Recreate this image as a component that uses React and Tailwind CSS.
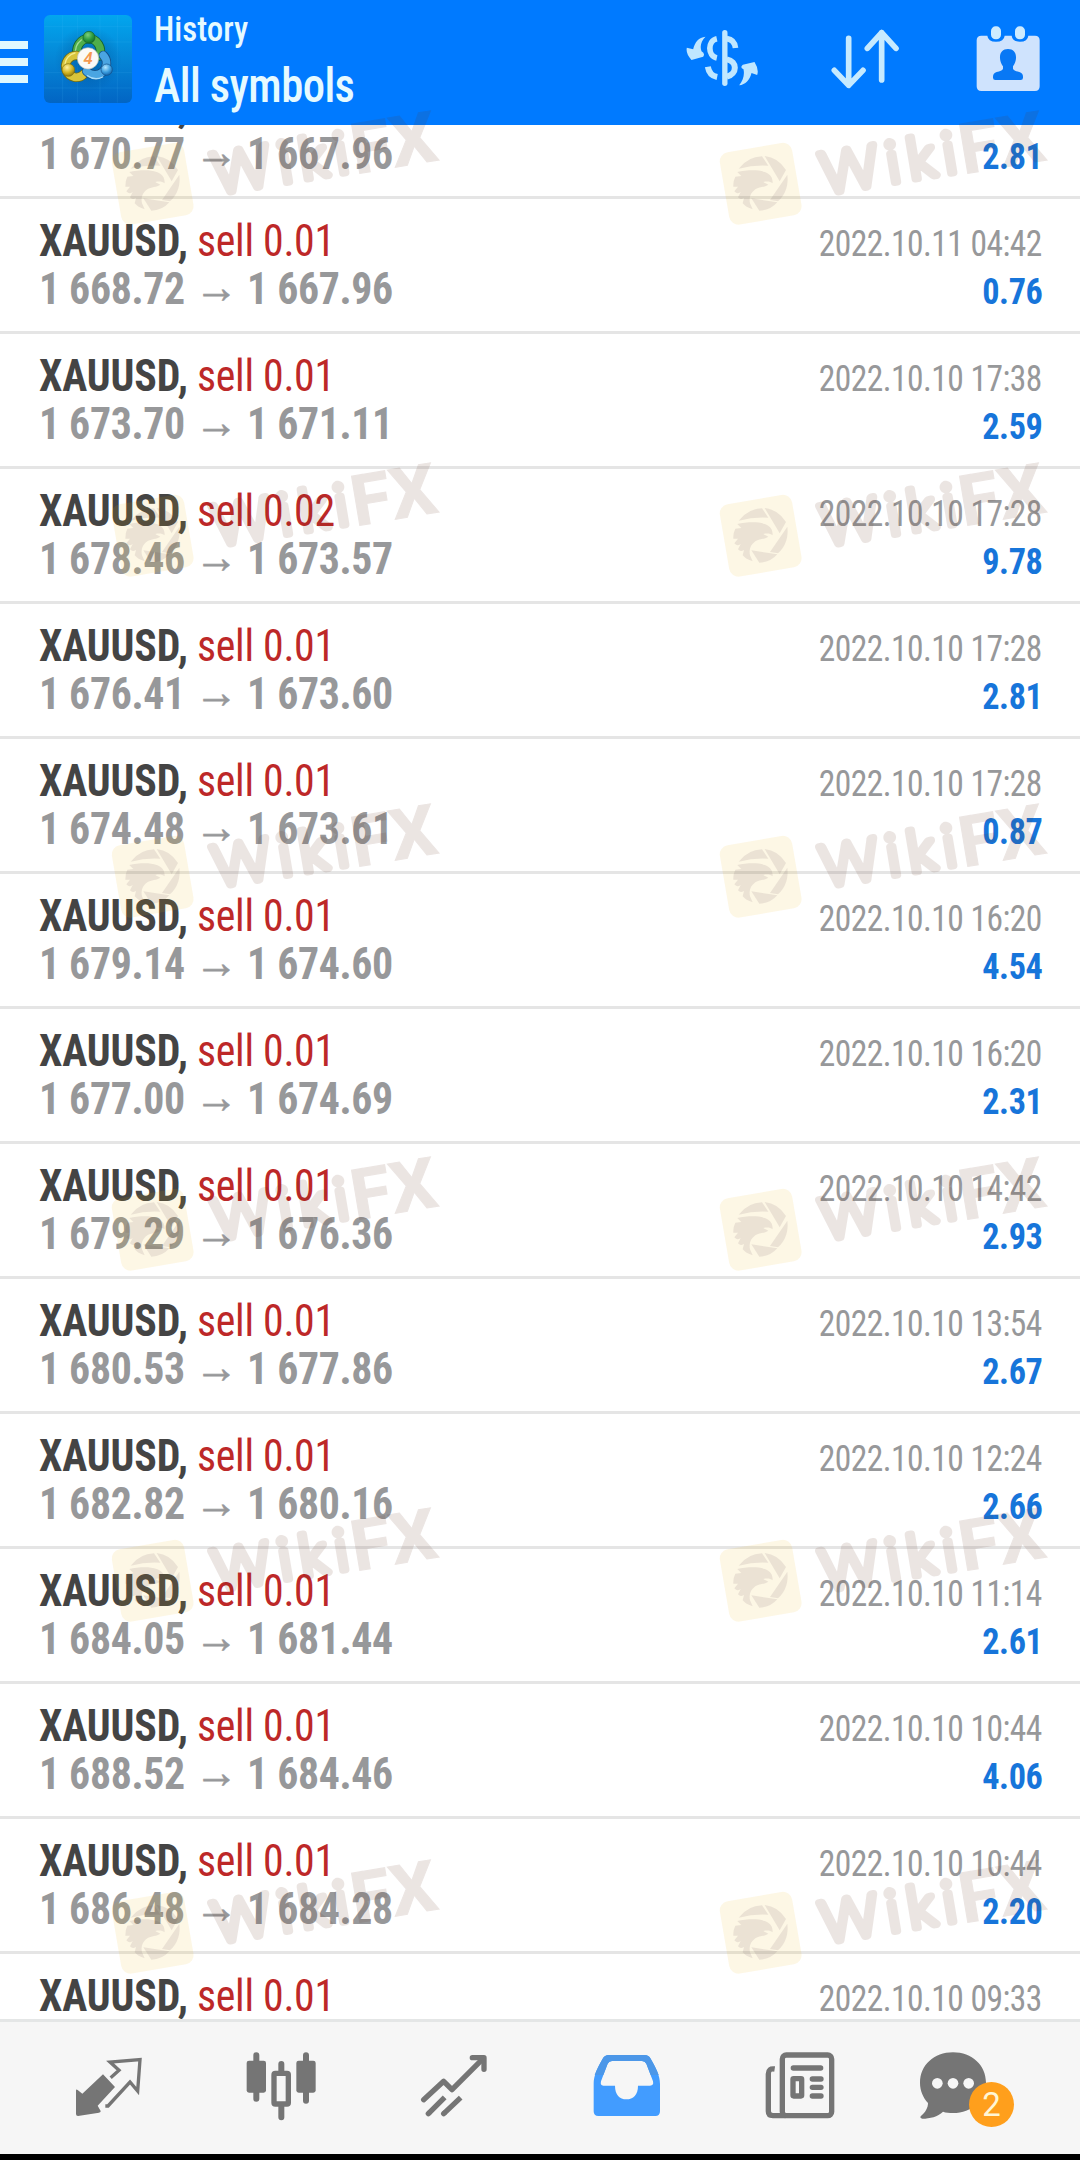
const trades = [
  { lot: "0.01", open: "1 670.77", close: "1 667.96", profit: "2.81" },
  { lot: "0.01", open: "1 668.72", close: "1 667.96", time: "2022.10.11 04:42", profit: "0.76" },
  { lot: "0.01", open: "1 673.70", close: "1 671.11", time: "2022.10.10 17:38", profit: "2.59" },
  { lot: "0.02", open: "1 678.46", close: "1 673.57", time: "2022.10.10 17:28", profit: "9.78" },
  { lot: "0.01", open: "1 676.41", close: "1 673.60", time: "2022.10.10 17:28", profit: "2.81" },
  { lot: "0.01", open: "1 674.48", close: "1 673.61", time: "2022.10.10 17:28", profit: "0.87" },
  { lot: "0.01", open: "1 679.14", close: "1 674.60", time: "2022.10.10 16:20", profit: "4.54" },
  { lot: "0.01", open: "1 677.00", close: "1 674.69", time: "2022.10.10 16:20", profit: "2.31" },
  { lot: "0.01", open: "1 679.29", close: "1 676.36", time: "2022.10.10 14:42", profit: "2.93" },
  { lot: "0.01", open: "1 680.53", close: "1 677.86", time: "2022.10.10 13:54", profit: "2.67" },
  { lot: "0.01", open: "1 682.82", close: "1 680.16", time: "2022.10.10 12:24", profit: "2.66" },
  { lot: "0.01", open: "1 684.05", close: "1 681.44", time: "2022.10.10 11:14", profit: "2.61" },
  { lot: "0.01", open: "1 688.52", close: "1 684.46", time: "2022.10.10 10:44", profit: "4.06" },
  { lot: "0.01", open: "1 686.48", close: "1 684.28", time: "2022.10.10 10:44", profit: "2.20" },
  { lot: "0.01", time: "2022.10.10 09:33" },
];

function AppLogo() {
  return (
    <svg viewBox="12 17 264 264" className="ml-4 h-[88px] w-[88px] shrink-0">
      <defs>
        <linearGradient id="tile" x1="0" y1="0" x2="0" y2="1">
          <stop offset="0" stopColor="#02a6ee" />
          <stop offset="0.5" stopColor="#0586d6" />
          <stop offset="1" stopColor="#0265c4" />
        </linearGradient>
        <radialGradient id="shade" cx="0.5" cy="0.5" r="0.5">
          <stop offset="0" stopColor="#00407e" stopOpacity="0.5" />
          <stop offset="1" stopColor="#00407e" stopOpacity="0" />
        </radialGradient>
        <radialGradient id="greenBall" cx="0.4" cy="0.3" r="0.7">
          <stop offset="0" stopColor="#7ed07a" />
          <stop offset="0.6" stopColor="#2b9a3e" />
          <stop offset="1" stopColor="#14702a" />
        </radialGradient>
        <radialGradient id="yellowBall" cx="0.4" cy="0.3" r="0.7">
          <stop offset="0" stopColor="#fff2a0" />
          <stop offset="0.6" stopColor="#d3b420" />
          <stop offset="1" stopColor="#927c10" />
        </radialGradient>
        <radialGradient id="blueBall" cx="0.4" cy="0.3" r="0.7">
          <stop offset="0" stopColor="#b4e6ff" />
          <stop offset="0.6" stopColor="#3d9fe0" />
          <stop offset="1" stopColor="#1668b0" />
        </radialGradient>
      </defs>
      <rect x="12" y="17" width="264" height="264" rx="18" fill="url(#tile)" />
      <path d="M68 18V280M112 18V280M180 18V280M232 18V280M13 52H275M13 98H275M13 190H275M13 236H275" stroke="#5cc4ff" strokeOpacity="0.12" strokeWidth="3" />
      <circle cx="144" cy="150" r="100" fill="url(#shade)" />
      <g fill="none" strokeLinecap="round">
        <path d="M114 140A35 37 0 1 1 178 140" stroke="#145f2c" strokeWidth="28" />
        <path d="M114 140A35 37 0 1 1 178 140" stroke="#4fae4b" strokeWidth="23" />
        <path d="M108 137A41 41 0 0 1 124 92" stroke="#a2dc96" strokeWidth="4" />
        <path d="M110 138A32 33 0 1 0 132 194" stroke="#6d6a16" strokeWidth="28" />
        <path d="M110 138A32 33 0 1 0 132 194" stroke="#d8c43a" strokeWidth="23" />
        <path d="M105 131A38 38 0 0 0 75 164" stroke="#f5eb8e" strokeWidth="4" />
        <path d="M190 138A34 34 0 1 1 140 186" stroke="#134e86" strokeWidth="28" />
        <path d="M190 138A34 34 0 1 1 140 186" stroke="#4aa5e2" strokeWidth="23" />
        <path d="M143 199A42 42 0 0 0 188 203" stroke="#a8dcfa" strokeWidth="4" />
      </g>
      <circle cx="147" cy="84" r="18" fill="url(#greenBall)" stroke="#145f2c" strokeWidth="2" />
      <circle cx="85" cy="182" r="19" fill="url(#yellowBall)" stroke="#7d6c10" strokeWidth="2" />
      <circle cx="200" cy="181" r="17" fill="url(#blueBall)" stroke="#134e86" strokeWidth="2" />
      <circle cx="144" cy="147" r="32" fill="#fbfaf7" stroke="#b7bdb8" strokeWidth="2" />
      <text x="144" y="164" textAnchor="middle" fontFamily="Roboto, sans-serif" fontWeight="600" fontStyle="italic" fontSize="50" fill="#f59a52">4</text>
    </svg>
  );
}

function Header() {
  return (
    <header className="flex h-[125px] shrink-0 items-start bg-[#007aff] pt-[15px] pr-10 shadow-[0_1px_1px_#0a5bb5]">
      <div className="mt-[26px] flex w-7 shrink-0 flex-col gap-[9px]">
        <span className="h-2 bg-[#dff8ff]" />
        <span className="h-2 bg-[#dff8ff]" />
        <span className="h-2 bg-[#dff8ff]" />
      </div>
      <AppLogo />
      <div className="-mt-[6px] ml-[22px] flex flex-col items-start whitespace-nowrap text-[#e6faff]">
        <span className="origin-left scale-x-[.94] text-[35px] leading-[42px] font-[480]">History</span>
        <span className="mt-[7px] origin-left scale-x-[.93] text-[48px] leading-[56px] font-[500] tracking-[-0.6px]">All symbols</span>
      </div>
      <div className="mt-[11px] ml-auto flex items-start">
        <svg viewBox="78 78 218 198" className="mr-[72px] h-[66px] w-[73px]" fill="none">
          <g stroke="#c0e7ff">
            <path d="M194 98V250" strokeWidth="16" strokeLinecap="round" />
            <path d="M170 116C142 122 142 168 170 174" strokeWidth="17" />
            <path d="M143 200C146 218 156 228 171 231" strokeWidth="18" />
            <path d="M200 116C215 118 224 128 226 144" strokeWidth="17" />
            <path d="M200 178C232 184 232 222 200 230" strokeWidth="18" />
          </g>
          <path d="M136 110C116 112 104 126 99 148L80 143Q76 160 94 180L129 170Q136 160 124 154C118 138 124 122 136 110Z" fill="#c0e7ff" />
          <path d="M237 256C256 254 269 240 274 219L291 225Q297 208 283 186L248 194Q238 202 250 208C254 226 248 242 237 256Z" fill="#c0e7ff" />
        </svg>
        <svg viewBox="513 78 204 198" className="mr-[77px] h-[66px] w-[68px]" fill="none" stroke="#c6eaff" strokeWidth="17" strokeLinecap="round" strokeLinejoin="round">
          <path d="M566 115V256M523 211L566 256L609 211" />
          <path d="M665 240V98M622 145L665 98L708 145" />
        </svg>
        <svg viewBox="948 78 192 198" className="h-[66px] w-[64px]">
          <path d="M964 107H982Q984 125 1008 125Q1032 125 1034 107H1055Q1057 125 1080 125Q1103 125 1105 107H1125Q1139 107 1139 121V259Q1139 273 1125 273H964Q950 273 950 259V121Q950 107 964 107Z" fill="#cfe3fd" />
          <rect x="993" y="79" width="30" height="39" rx="14" fill="#cdebff" />
          <rect x="1065" y="79" width="30" height="39" rx="14" fill="#cdebff" />
          <path d="M1044 147C1060 147 1069 158 1068 174C1067 188 1062 194 1059 199V206C1061 212 1068 213 1078 216Q1089 219 1089 230V233Q1089 240 1082 240H1006Q999 240 999 233V230Q999 219 1010 216C1020 213 1027 212 1029 206V199C1026 194 1021 188 1020 174C1019 158 1028 147 1044 147Z" fill="#0878f5" />
        </svg>
      </div>
    </header>
  );
}

function TradeRow({ lot, open, close, time, profit }) {
  return (
    <div className="h-[135px] shrink-0 border-b-[3px] border-[#e5e5e5] pt-[18px] pr-[38px] pl-[39px] whitespace-nowrap">
      <div className="flex h-12 items-baseline justify-between leading-[48px]">
        <div className="flex origin-left scale-x-[.95] items-baseline text-[44px]">
          <span className="font-bold tracking-[-0.1px] text-[#444444]">XAUUSD,</span>
          <span className="ml-[9.5px] font-[450] tracking-[-0.3px] text-[#bd2828]">sell {lot}</span>
        </div>
        <span className="origin-right scale-x-[.93] text-[36px] font-[450] tracking-[-0.58px] text-[#97989a]">{time}</span>
      </div>
      {open && (
        <div className="-mt-px flex h-12 items-baseline justify-between leading-[48px]">
          <div className="flex origin-left scale-x-[.95] items-baseline text-[44px] font-bold tracking-[-0.35px] text-[#97989a]">
            <span className="w-[153px]">{open}</span>
            <span className="relative -top-[1px] mr-[9px] ml-[11px] w-[46px] font-['Liberation_Sans',sans-serif] text-[46px] font-normal tracking-normal [-webkit-text-stroke:0.6px]">→</span>
            <span>{close}</span>
          </div>
          <span className="origin-right scale-x-[.95] text-[36px] font-bold tracking-[-0.4px] text-[#1775da]">{profit}</span>
        </div>
      )}
    </div>
  );
}

function Watermark() {
  return (
    <svg viewBox="160 320 1020 380" className="h-[126.67px] w-[340px] overflow-visible">
      <rect x="190" y="443" width="220" height="220" rx="28" transform="rotate(-9.8 302 553)" fill="#f0b400" fillOpacity="0.1" />
      <g fill="#5a3c50" fillOpacity="0.11">
        <path d="M234 508Q262 472 304 471L323 499Q280 496 234 508Z" />
        <path d="M312 470Q352 474 376 512L357 546Z" />
        <path d="M380 526Q386 574 352 606L328 602Z" />
        <path d="M272 597L350 609Q328 634 296 634Z" />
        <path d="M230 518C255 512 292 510 312 518C328 524 336 532 336 552C328 546 320 546 308 548C314 552 320 554 323 556C312 564 296 562 284 570C270 580 264 594 268 612L276 630C262 626 252 620 246 612L250 596C242 600 238 600 232 594L240 578C232 584 226 582 221 576L232 562L218 562Q217 545 224 532L242 530Z" />
      </g>
      <g transform="rotate(-9.5 475 597)" fill="#64321e" stroke="#64321e" opacity="0.12">
        <text x="493" y="587" fontFamily="Lato, sans-serif" fontWeight="300" fontSize="171" strokeWidth="23" strokeLinejoin="round" textLength="408" lengthAdjust="spacing">Wiki</text>
        <text x="914" y="597" fontFamily="Roboto, sans-serif" fontWeight="700" fontSize="211" strokeWidth="3" textLength="257" lengthAdjust="spacingAndGlyphs">FX</text>
      </g>
    </svg>
  );
}

function WatermarkColumn() {
  return (
    <div className="flex w-[340px] shrink-0 flex-col">
      <div className="h-[352px]"><Watermark /></div>
      <div className="h-[341px]"><Watermark /></div>
      <div className="h-[353px]"><Watermark /></div>
      <div className="h-[351px]"><Watermark /></div>
      <div className="h-[352px]"><Watermark /></div>
      <Watermark />
    </div>
  );
}

function Slot({ viewBox, children, badge }) {
  return (
    <div className="relative flex w-[173px] shrink-0 justify-center">
      <svg viewBox={viewBox} className="h-[70px] w-[70px] overflow-visible">{children}</svg>
      {badge && (
        <span className="absolute top-[32px] left-[83px] flex h-[45px] w-[45px] items-center justify-center rounded-full bg-[#ff9f1c] font-[Roboto,sans-serif] text-[33px] leading-none text-[#fff6d5]">{badge}</span>
      )}
    </div>
  );
}

function BottomNav() {
  const grey = "#757575";
  return (
    <nav className="flex h-[135px] shrink-0 items-start border-t-[3px] border-[#e4e6e6] bg-[#f6f6f6] pt-7 pl-[21px]">
      <Slot viewBox="219 150 210 210">
        <path d="M309 223L345 261L293 317L302 333Q303 337 297 338L234 348Q228 348 228 342V272Q228 266 233 270L247 281Z" fill={grey} />
        <path d="M316 318H324L390 246L413 273L420 179L330 186L357 211L332 233" fill="none" stroke={grey} strokeWidth="10" />
      </Slot>
      <Slot viewBox="738 150 210 210">
        <g stroke={grey} strokeWidth="18" strokeLinecap="round">
          <path d="M769 166V296M844 192V212M844 320V352M918 166V302" />
        </g>
        <rect x="740" y="182" width="58" height="96" rx="7" fill={grey} />
        <rect x="889" y="182" width="58" height="96" rx="7" fill={grey} />
        <rect x="822" y="220" width="43" height="92" rx="4" fill="#f6f6f6" stroke={grey} strokeWidth="16" />
      </Slot>
      <Slot viewBox="178 150 210 210">
        <g fill="none" stroke={grey} strokeWidth="16" strokeLinecap="round" strokeLinejoin="round">
          <path d="M192 299L252 244L277 269L370 176" />
          <path d="M338 173H373V208" />
          <path d="M207 340L255 292M253 340L303 293" strokeLinecap="butt" />
          <path d="M206 341L207 340M252 341L253 340" />
        </g>
      </Slot>
      <Slot viewBox="698 150 210 210">
        <path fillRule="evenodd" fill="#429cff" d="M748 165H856Q868 165 874 176C890 205 902 225 902 252V334Q902 348 888 348H717Q703 348 703 334V252C703 225 714 205 730 176Q736 165 748 165ZM758 183Q749 183 745 191L725 244Q722 257 732 257H767C767 284 781 298 801 298C822 298 836 284 836 257H872Q884 257 881 244L861 191Q857 183 848 183Z" />
        <path fill="#4c97e8" d="M748 165H856Q868 165 874 176C884 194 893 209 898 225H874L861 191Q857 183 848 183H758Q749 183 745 191L732 225H706C711 209 720 194 730 176Q736 165 748 165Z" />
      </Slot>
      <Slot viewBox="138 150 210 210">
        <g fill="none" stroke={grey} strokeWidth="16">
          <rect x="190" y="165" width="148" height="182" rx="12" />
          <path d="M167 207Q148 204 148 222V334Q148 347 162 347H200" />
          <path d="M223 204H305M280 237H306M280 262H306M280 288H306" strokeLinecap="round" />
          <rect x="222" y="236" width="26" height="52" rx="2" />
        </g>
      </Slot>
      <Slot viewBox="654 150 210 210" badge="2">
        <path d="M699 157C756 157 798 196 798 248C798 300 756 339 699 339C688 339 678 338 669 335C653 350 630 356 607 356Q599 355 602 349C616 337 624 324 624 309C609 292 600 272 600 248C600 196 642 157 699 157Z" fill={grey} />
        <g fill="#f6f6f6">
          <circle cx="652" cy="250" r="16" />
          <circle cx="699" cy="250" r="16" />
          <circle cx="746" cy="250" r="16" />
        </g>
      </Slot>
    </nav>
  );
}

export default function App() {
  return (
    <div className="relative flex h-[2160px] w-[1080px] flex-col overflow-hidden bg-black font-['Roboto_Condensed',Roboto,sans-serif]">
      <Header />
      <main className="min-h-0 flex-1 overflow-hidden bg-white">
        <div className="-mt-[61px] flex flex-col">
          {trades.map((trade, i) => <TradeRow key={i} {...trade} />)}
        </div>
      </main>
      <BottomNav />
      <div className="h-[6px] shrink-0 bg-black" />
      <div className="pointer-events-none absolute top-[106px] left-[106px] flex gap-[268px]">
        <WatermarkColumn />
        <WatermarkColumn />
      </div>
    </div>
  );
}
